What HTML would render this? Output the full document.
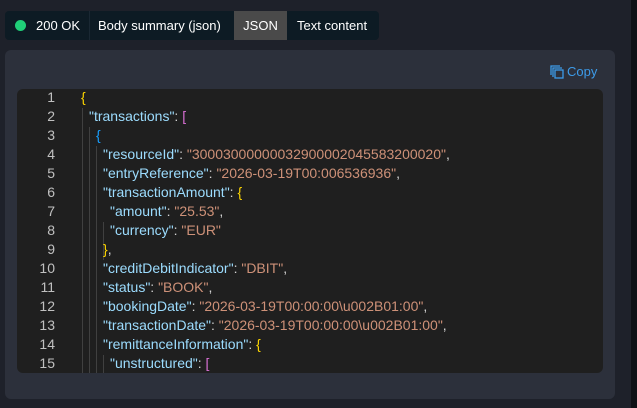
<!DOCTYPE html>
<html><head><style>
html,body{margin:0;padding:0;}
body{width:637px;height:408px;background:#1e212a;position:relative;overflow:hidden;font-family:"Liberation Sans",sans-serif;}
.strip{position:absolute;left:631px;top:0;width:6px;height:408px;background:#0e1116;}
.tabs{position:absolute;left:5px;top:11px;width:374px;height:29px;background:#0d1b24;border-radius:4px;overflow:hidden;font-size:13px;color:#fff;}
.tab{position:absolute;top:0;height:29px;line-height:29px;}
.dot{position:absolute;left:10px;top:9px;width:11px;height:11px;border-radius:50%;background:#1fcf78;}
.panel{position:absolute;left:5px;top:50px;width:610px;height:349px;background:#2c303b;border-radius:6px;}
.copy{position:absolute;left:567px;top:64px;font-size:13px;color:#3d9be9;}
.ed{position:absolute;left:17px;top:89px;width:586px;height:284px;background:#1f1f1f;border-radius:6px;overflow:hidden;}
.ln{position:absolute;left:0;width:38px;text-align:right;color:#c0c0c0;}
.l{position:absolute;white-space:pre;color:#d4d4d4;}
.g{position:absolute;width:1px;background:#404040;}
.k{color:#9cdcfe}.s{color:#ce9178}.y{color:#ffd700}.p{color:#da70d6}.b{color:#179fff}
</style></head><body>
<div class="strip"></div>
<div class="tabs">
<div class="dot"></div>
<div class="tab" style="left:31px">200 OK</div>
<div class="tab" style="left:84px;width:1px;background:#1a2833"></div>
<div class="tab" style="left:93px">Body summary (json)</div>
<div class="tab" style="left:229px;width:53px;background:#4a4a4a;text-align:center">JSON</div>
<div class="tab" style="left:292px">Text content</div>
</div>
<div class="panel"></div>
<svg style="position:absolute;left:550px;top:65px" width="14" height="14" viewBox="0 0 14 14" fill="none" stroke="#3d9be9" stroke-width="1.3"><path d="M1 10V1h9"/><path d="M3 12V3h9"/><rect x="5" y="5" width="8" height="8"/></svg>
<div class="copy">Copy</div>
<div class="ed">
<div class="g" style="left:65px;top:19px;height:265px"></div>
<div class="g" style="left:72px;top:38px;height:246px"></div>
<div class="g" style="left:79px;top:57px;height:227px"></div>
<div class="g" style="left:86px;top:133px;height:38px"></div>
<div class="g" style="left:86px;top:266px;height:18px"></div>
</div>
<div style="position:absolute;left:17px;top:89px;width:586px;height:284px;overflow:hidden;font-size:14px;">
<div class="ln" style="top:0px">1</div><div class="l" style="left:64px;top:0px"><span class="y">{</span></div>
<div class="ln" style="top:19px">2</div><div class="l" style="left:72px;top:19px"><span class="k">"transactions"</span>: <span class="p">[</span></div>
<div class="ln" style="top:38px">3</div><div class="l" style="left:79px;top:38px"><span class="b">{</span></div>
<div class="ln" style="top:57px">4</div><div class="l" style="left:86px;top:57px"><span class="k">"resourceId"</span>: <span class="s">"30003000000032900002045583200020"</span>,</div>
<div class="ln" style="top:76px">5</div><div class="l" style="left:86px;top:76px"><span class="k">"entryReference"</span>: <span class="s">"2026-03-19T00:006536936"</span>,</div>
<div class="ln" style="top:95px">6</div><div class="l" style="left:86px;top:95px"><span class="k">"transactionAmount"</span>: <span class="y">{</span></div>
<div class="ln" style="top:114px">7</div><div class="l" style="left:93px;top:114px"><span class="k">"amount"</span>: <span class="s">"25.53"</span>,</div>
<div class="ln" style="top:133px">8</div><div class="l" style="left:93px;top:133px"><span class="k">"currency"</span>: <span class="s">"EUR"</span></div>
<div class="ln" style="top:152px">9</div><div class="l" style="left:86px;top:152px"><span class="y">}</span>,</div>
<div class="ln" style="top:171px">10</div><div class="l" style="left:86px;top:171px"><span class="k">"creditDebitIndicator"</span>: <span class="s">"DBIT"</span>,</div>
<div class="ln" style="top:190px">11</div><div class="l" style="left:86px;top:190px"><span class="k">"status"</span>: <span class="s">"BOOK"</span>,</div>
<div class="ln" style="top:209px">12</div><div class="l" style="left:86px;top:209px"><span class="k">"bookingDate"</span>: <span class="s">"2026-03-19T00:00:00\u002B01:00"</span>,</div>
<div class="ln" style="top:228px">13</div><div class="l" style="left:86px;top:228px"><span class="k">"transactionDate"</span>: <span class="s">"2026-03-19T00:00:00\u002B01:00"</span>,</div>
<div class="ln" style="top:247px">14</div><div class="l" style="left:86px;top:247px"><span class="k">"remittanceInformation"</span>: <span class="y">{</span></div>
<div class="ln" style="top:266px">15</div><div class="l" style="left:93px;top:266px"><span class="k">"unstructured"</span>: <span class="p">[</span></div>
</div>
</body></html>
